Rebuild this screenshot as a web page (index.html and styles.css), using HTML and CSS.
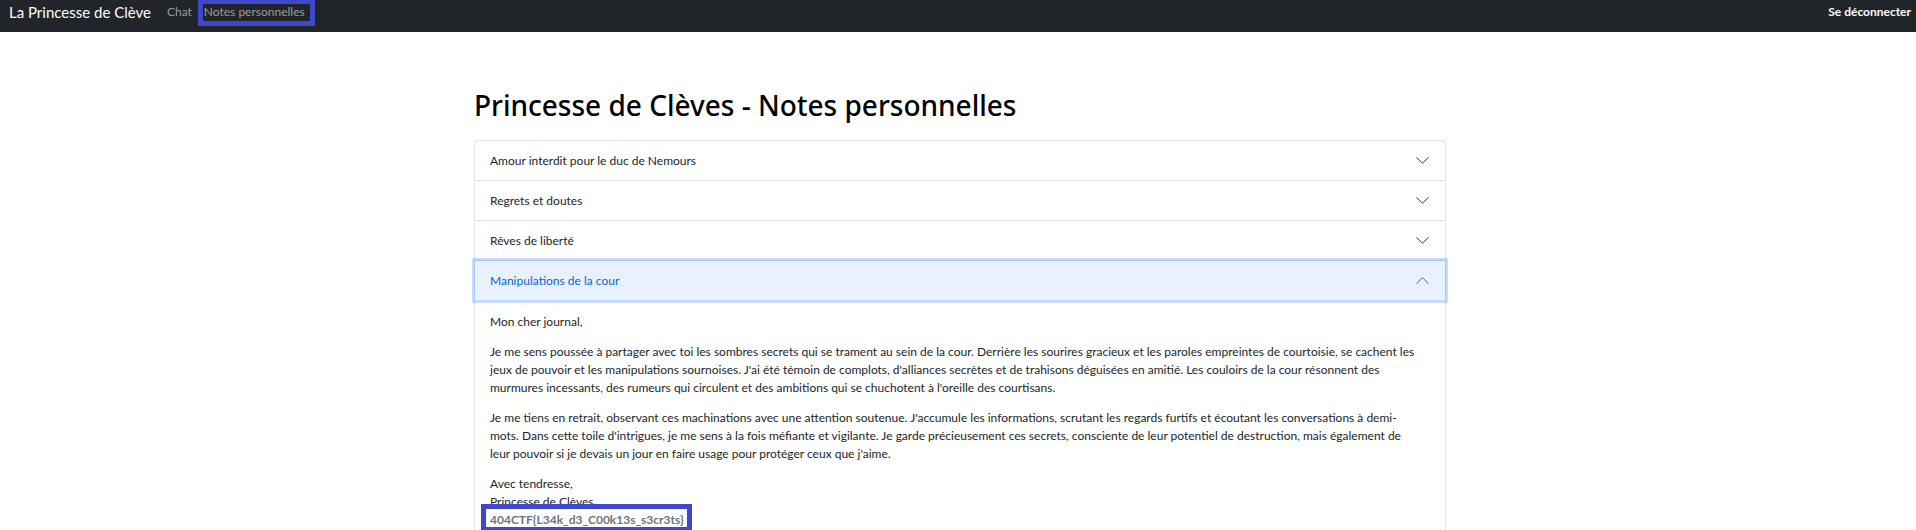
FILE: index.html
```html
<!DOCTYPE html>
<html lang="fr">
<head>
<meta charset="utf-8">
<title>Notes personnelles</title>
<link rel="stylesheet" href="styles.css">
</head>
<body>
<nav class="navbar">
  <a class="brand" href="#">La Princesse de Clève</a>
  <a class="nav-link" href="#">Chat</a>
  <a class="nav-link marked marked-nav" href="#">Notes personnelles</a>
  <a class="logout" href="#">Se déconnecter</a>
</nav>
<main class="container">
  <h1 class="title">Princesse de Clèves - Notes personnelles</h1>
  <div class="accordion">
    <section class="item">
      <button class="toggle" type="button" aria-expanded="false">Amour interdit pour le duc de Nemours
        <svg class="chevron" viewBox="0 0 16 16" aria-hidden="true"><path d="M2 5l6 6 6-6"/></svg></button>
    </section>
    <section class="item">
      <button class="toggle" type="button" aria-expanded="false">Regrets et doutes
        <svg class="chevron" viewBox="0 0 16 16" aria-hidden="true"><path d="M2 5l6 6 6-6"/></svg></button>
    </section>
    <section class="item">
      <button class="toggle" type="button" aria-expanded="false">Rêves de liberté
        <svg class="chevron" viewBox="0 0 16 16" aria-hidden="true"><path d="M2 5l6 6 6-6"/></svg></button>
    </section>
    <section class="item">
      <button class="toggle toggle-open" type="button" aria-expanded="true" aria-controls="note">Manipulations de la cour
        <svg class="chevron" viewBox="0 0 16 16" aria-hidden="true"><path d="M2 11l6-6 6 6"/></svg></button>
      <div class="note" id="note">
        <p>Mon cher journal,</p>
        <p>Je me sens poussée à partager avec toi les sombres secrets qui se trament au sein de la cour. Derrière les sourires gracieux et les paroles empreintes de courtoisie, se cachent les<br>jeux de pouvoir et les manipulations sournoises. J'ai été témoin de complots, d'alliances secrètes et de trahisons déguisées en amitié. Les couloirs de la cour résonnent des<br>murmures incessants, des rumeurs qui circulent et des ambitions qui se chuchotent à l'oreille des courtisans.</p>
        <p>Je me tiens en retrait, observant ces machinations avec une attention soutenue. J'accumule les informations, scrutant les regards furtifs et écoutant les conversations à demi-<br>mots. Dans cette toile d'intrigues, je me sens à la fois méfiante et vigilante. Je garde précieusement ces secrets, consciente de leur potentiel de destruction, mais également de<br>leur pouvoir si je devais un jour en faire usage pour protéger ceux que j'aime.</p>
        <p>Avec tendresse,<br>Princesse de Clèves<br><b class="flag marked marked-flag">404CTF{L34k_d3_C00k13s_s3cr3ts}</b></p>
      </div>
    </section>
  </div>
</main>
</body>
</html>
```
FILE: styles.css
```css
* { box-sizing: border-box; }
body {
  margin: 0;
  color: #212529;
  background: #fff;
  font: 12px/18px Lato, "Noto Sans", sans-serif;
}
.navbar {
  display: flex;
  align-items: center;
  height: 32px;
  padding: 0 5px 8px 9px;
  background: #212529;
}
.navbar a { text-decoration: none; }
.brand { margin-right: 16px; color: #fff; font-size: 15px; }
.nav-link { margin-right: 12px; color: #9b9d9f; }
.logout { margin-left: auto; color: #fff; font-weight: 700; }
.marked { position: relative; }
.marked::after {
  content: "";
  position: absolute;
  border: 5px solid #3f48cc;
  pointer-events: none;
}
.marked-nav::after { inset: -4px -10px -5px -6px; }
.marked-flag::after { inset: -8px -8px -5px -9px; }
.container {
  width: 976px;
  max-width: 100%;
  margin: 0 auto;
  padding: 53px 0 0 4px;
}
.title {
  margin: 0 0 15px;
  color: #000;
  font: 500 28px/40px "Noto Sans", sans-serif;
}
.accordion {
  border: 1px solid #dee2e6;
  border-bottom: 0;
  border-radius: 4px 4px 0 0;
}
.item + .item { border-top: 1px solid #dee2e6; }
.toggle {
  display: flex;
  align-items: center;
  justify-content: space-between;
  width: 100%;
  height: 39px;
  padding: 0 15px;
  border: 0;
  background: none;
  color: inherit;
  font: inherit;
  text-align: left;
}
.toggle-open {
  background: #e7f1ff;
  color: #0c63e4;
  box-shadow: 0 0 0 3px rgba(13, 110, 253, .25);
}
.chevron {
  width: 15px;
  height: 15px;
  fill: none;
  stroke: currentColor;
  stroke-linecap: round;
  stroke-linejoin: round;
}
.note { padding: 13px 15px 1px; }
.note p { margin: 0 0 12px; }
.note p:last-child { margin-bottom: 0; }
.flag { color: #6c757d; }
```
